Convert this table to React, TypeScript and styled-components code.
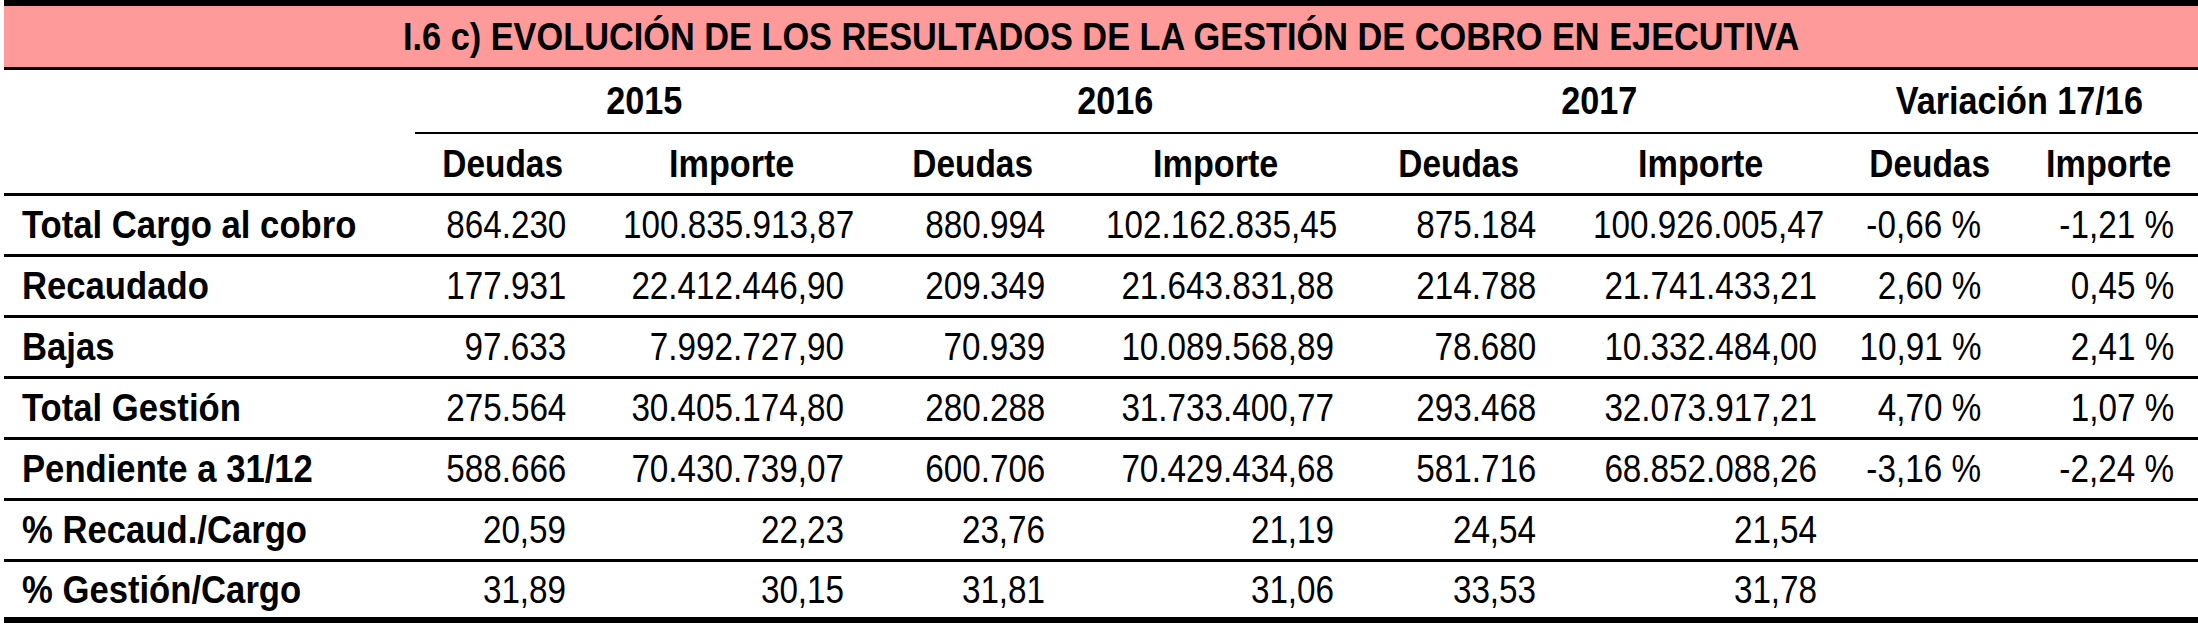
import styled, { createGlobalStyle } from 'styled-components';

const GlobalStyle = createGlobalStyle`
  html, body {
    margin: 0;
    padding: 0;
    background: #ffffff;
  }
  body {
    font-family: 'Liberation Sans', Arial, sans-serif;
    color: #000;
  }
`;

// widths of the spreadsheet columns, label first
const COLUMN_WIDTHS = [411, 175, 283, 200, 285, 202, 281, 178, 179];
// right padding per value column (the source sheet is not even)
const VALUE_PAD = [24, 29, 28, 24, 24, 24, 38, 24];

const years = [
    { label: '2015', span: 2 },
    { label: '2016', span: 2 },
    { label: '2017', span: 2 },
    { label: 'Variación 17/16', span: 2 },
];

const rows = [
    { label: 'Total Cargo al cobro', values: ['864.230', '100.835.913,87', '880.994', '102.162.835,45', '875.184', '100.926.005,47', '-0,66 %', '-1,21 %'] },
    { label: 'Recaudado', values: ['177.931', '22.412.446,90', '209.349', '21.643.831,88', '214.788', '21.741.433,21', '2,60 %', '0,45 %'] },
    { label: 'Bajas', values: ['97.633', '7.992.727,90', '70.939', '10.089.568,89', '78.680', '10.332.484,00', '10,91 %', '2,41 %'] },
    { label: 'Total Gestión', values: ['275.564', '30.405.174,80', '280.288', '31.733.400,77', '293.468', '32.073.917,21', '4,70 %', '1,07 %'] },
    { label: 'Pendiente a 31/12', values: ['588.666', '70.430.739,07', '600.706', '70.429.434,68', '581.716', '68.852.088,26', '-3,16 %', '-2,24 %'] },
    { label: '% Recaud./Cargo', values: ['20,59', '22,23', '23,76', '21,19', '24,54', '21,54', '', ''] },
    { label: '% Gestión/Cargo', values: ['31,89', '30,15', '31,81', '31,06', '33,53', '31,78', '', ''] },
];

const Page = styled.div`
  padding-left: 4px;
`;

const Table = styled.table`
  width: 2194px;
  table-layout: fixed;
  border-collapse: separate;
  border-spacing: 0;
  font-size: 38px;
  line-height: 1;
`;

// no narrow face is installed, so squeeze the regular one like Arial Narrow
const Narrow = styled.span<{ $k: number; $origin: 'left' | 'center' | 'right' }>`
  display: inline-block;
  white-space: nowrap;
  transform: scaleX(${p => p.$k});
  transform-origin: ${p => p.$origin} center;
`;

const TitleCell = styled.td`
  height: 61px;
  padding: 0;
  background: #ff9a9a;
  border-top: 6px solid #000;
  border-bottom: 3px solid #000;
  text-align: center;
  font-weight: 700;
  font-size: 38px;
`;

const CornerCell = styled.td`
  padding: 0;
  border-bottom: 3px solid #000;
`;

const YearCell = styled.td`
  height: 62px;
  padding: 0;
  border-bottom: 2px solid #000;
  text-align: center;
  font-weight: 700;
`;

const SubHeadCell = styled.td`
  height: 59px;
  padding: 0;
  border-bottom: 3px solid #000;
  text-align: center;
  font-weight: 700;
`;

const LabelCell = styled.td<{ $last?: boolean }>`
  height: ${p => (p.$last ? 55 : 58)}px;
  padding: 0 0 0 18px;
  border-bottom: ${p => (p.$last ? 6 : 3)}px solid #000;
  font-weight: 700;
  white-space: nowrap;
`;

const ValueCell = styled.td<{ $last?: boolean; $pad: number }>`
  height: ${p => (p.$last ? 55 : 58)}px;
  padding: 0 ${p => p.$pad}px 0 0;
  border-bottom: ${p => (p.$last ? 6 : 3)}px solid #000;
  text-align: right;
  white-space: nowrap;
`;

export default function App() {
    return (
        <Page>
            <GlobalStyle />
            <Table>
                <colgroup>
                    {COLUMN_WIDTHS.map((w, i) => (
                        <col key={i} style={{ width: w }} />
                    ))}
                </colgroup>
                <tbody>
                    <tr>
                        <TitleCell colSpan={9}>
                            <Narrow $k={0.903} $origin="center">
                                I.6 c) EVOLUCIÓN DE LOS RESULTADOS DE LA GESTIÓN DE COBRO EN EJECUTIVA
                            </Narrow>
                        </TitleCell>
                    </tr>
                    <tr>
                        <CornerCell rowSpan={2} />
                        {years.map(y => (
                            <YearCell key={y.label} colSpan={y.span}>
                                <Narrow $k={0.9} $origin="center">{y.label}</Narrow>
                            </YearCell>
                        ))}
                    </tr>
                    <tr>
                        {years.map(y => [
                            <SubHeadCell key={y.label + 'd'}>
                                <Narrow $k={0.88} $origin="center">Deudas</Narrow>
                            </SubHeadCell>,
                            <SubHeadCell key={y.label + 'i'}>
                                <Narrow $k={0.9} $origin="center">Importe</Narrow>
                            </SubHeadCell>,
                        ])}
                    </tr>
                    {rows.map((row, r) => {
                        const last = r === rows.length - 1;
                        return (
                            <tr key={row.label}>
                                <LabelCell $last={last}>
                                    <Narrow $k={0.912} $origin="left">{row.label}</Narrow>
                                </LabelCell>
                                {row.values.map((v, i) => (
                                    <ValueCell key={i} $last={last} $pad={VALUE_PAD[i]}>
                                        <Narrow $k={0.875} $origin="right">{v}</Narrow>
                                    </ValueCell>
                                ))}
                            </tr>
                        );
                    })}
                </tbody>
            </Table>
        </Page>
    );
}
